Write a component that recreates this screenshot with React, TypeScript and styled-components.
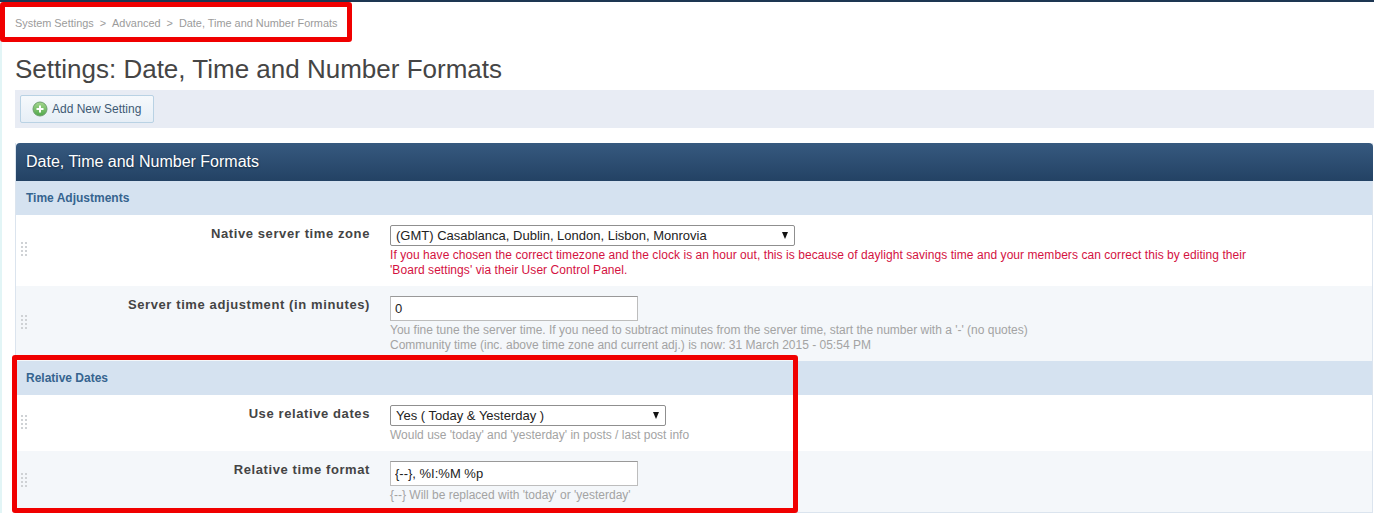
import styled, { createGlobalStyle } from 'styled-components'

const GlobalStyle = createGlobalStyle`
  html, body {
    margin: 0;
    padding: 0;
    background: #fff;
    font-family: "Liberation Sans", Arial, sans-serif;
    overflow: hidden;
  }
`

const Page = styled.div`
  position: relative;
  width: 1374px;
  height: 513px;
  overflow: hidden;
  border-top: 2px solid #1d3652;
  box-sizing: border-box;
  padding-left: 15px;
  box-shadow: inset 2px 0 0 #e2f5f6;
`

const Breadcrumb = styled.div`
  display: flex;
  gap: 6px;
  height: 42px;
  align-items: center;
  font-size: 10.9px;
  color: #9b9b9b;
`

const Title = styled.h1`
  margin: 0;
  height: 46px;
  line-height: 50px;
  font-size: 26px;
  font-weight: 400;
  color: #454545;
`

const Toolbar = styled.div`
  display: flex;
  align-items: center;
  height: 38px;
  padding-left: 5px;
  background: #e8ecf4;
`

const AddButton = styled.button`
  display: flex;
  align-items: center;
  gap: 4px;
  width: 134px;
  height: 28px;
  padding: 0 0 0 11px;
  border: 1px solid #b9d2e4;
  border-radius: 2px;
  background: linear-gradient(#f6f9fc, #e6eef6);
  color: #3e5a74;
  font-family: inherit;
  font-size: 12px;
`

const Panel = styled.section`
  margin-top: 15px;
  width: 1358px;
  box-sizing: border-box;
  border-right: 1px solid #dbe4ee;
  border-left: 1px solid #dbe4ee;
  border-bottom: 1px solid #dbe4ee;
`

const PanelHeader = styled.h2`
  margin: 0 -1px 0 0;
  height: 38px;
  padding-left: 10px;
  line-height: 38px;
  border-radius: 4px 4px 0 0;
  background: linear-gradient(#36597f, #234264);
  color: #fff;
  font-size: 16px;
  font-weight: 400;
  text-shadow: 0 1px 2px #12263c;
`

const SectionHeader = styled.h3`
  margin: 0;
  height: 34px;
  padding-left: 10px;
  line-height: 34px;
  background: #d5e2f0;
  color: #36648f;
  font-size: 12px;
  font-weight: 700;
`

const Row = styled.div<{ $alt?: boolean; $height: number }>`
  display: flex;
  height: ${(p) => p.$height}px;
  box-sizing: border-box;
  padding-top: 10px;
  background: ${(p) => (p.$alt ? '#f4f7fa' : '#fff')};
`

const Grip = styled.div`
  align-self: center;
  display: grid;
  grid-template-columns: repeat(2, 2px);
  gap: 2px;
  margin: -13px 0 0 5px;
  width: 6px;
  flex: none;

  span {
    width: 2px;
    height: 2px;
    background: #cfd2d5;
  }
`

const Label = styled.div`
  width: 343px;
  flex: none;
  padding-top: 1px;
  text-align: right;
  font-size: 13px;
  line-height: 15px;
  font-weight: 700;
  letter-spacing: 0.6px;
  color: #444;
`

const Control = styled.div`
  margin-left: 20px;
  flex: 1;
`

const SelectWrap = styled.div<{ $width: number }>`
  position: relative;
  width: ${(p) => p.$width}px;
  height: 21px;

  &::after {
    content: '';
    position: absolute;
    right: 7px;
    top: 7px;
    border-left: 3px solid transparent;
    border-right: 3px solid transparent;
    border-top: 7px solid #111;
  }
`

const Select = styled.select`
  appearance: none;
  display: block;
  width: 100%;
  height: 21px;
  box-sizing: border-box;
  padding: 0 0 0 5px;
  border: 1px solid #8f8f8f;
  border-radius: 2px;
  background: #fff;
  color: #222;
  font-family: inherit;
  font-size: 13px;
`

const TextField = styled.input`
  display: block;
  width: 248px;
  height: 25px;
  box-sizing: border-box;
  padding: 0 4px;
  border: 1px solid #bdbdbd;
  border-top-color: #999;
  background: #fff;
  color: #222;
  font-family: inherit;
  font-size: 13px;
`

const Hint = styled.div<{ $error?: boolean }>`
  margin-top: 2px;
  font-size: 12px;
  line-height: 15px;
  letter-spacing: ${(p) => (p.$error ? '0.06px' : '0')};
  color: ${(p) => (p.$error ? '#d4123f' : '#a3a3a3')};
`

const Highlight = styled.div<{ $left: number; $top: number; $width: number; $height: number }>`
  position: absolute;
  left: ${(p) => p.$left}px;
  top: ${(p) => p.$top}px;
  width: ${(p) => p.$width}px;
  height: ${(p) => p.$height}px;
  box-sizing: border-box;
  border: 5px solid #f00000;
  border-radius: 3px;
  pointer-events: none;
`

const DragHandle = () => (
  <Grip>
    {Array.from({ length: 8 }, (_, i) => (
      <span key={i} />
    ))}
  </Grip>
)

const AddIcon = () => (
  <svg width="16" height="16" viewBox="0 0 16 16" aria-hidden="true">
    <defs>
      <linearGradient id="addGreen" x1="0" y1="0" x2="0" y2="1">
        <stop offset="0" stopColor="#a6d88f" />
        <stop offset="1" stopColor="#4fa74a" />
      </linearGradient>
    </defs>
    <circle cx="8" cy="8" r="7" fill="url(#addGreen)" stroke="#6f9f70" />
    <path d="M8 4.5v7M4.5 8h7" stroke="#fff" strokeWidth="2" />
  </svg>
)

const App = () => (
  <>
    <GlobalStyle />
    <Page>
      <Breadcrumb>
        <span>System Settings</span>
        <span>&gt;</span>
        <span>Advanced</span>
        <span>&gt;</span>
        <span>Date, Time and Number Formats</span>
      </Breadcrumb>
      <Title>Settings: Date, Time and Number Formats</Title>
      <Toolbar>
        <AddButton type="button">
          <AddIcon />
          Add New Setting
        </AddButton>
      </Toolbar>
      <Panel>
        <PanelHeader>Date, Time and Number Formats</PanelHeader>
        <SectionHeader>Time Adjustments</SectionHeader>
        <Row $height={71}>
          <DragHandle />
          <Label>Native server time zone</Label>
          <Control>
            <SelectWrap $width={405}>
              <Select defaultValue="gmt">
                <option value="gmt">(GMT) Casablanca, Dublin, London, Lisbon, Monrovia</option>
              </Select>
            </SelectWrap>
            <Hint $error>
              If you have chosen the correct timezone and the clock is an hour out, this is because of daylight savings time and your members can correct this by editing their
              <br />
              'Board settings' via their User Control Panel.
            </Hint>
          </Control>
        </Row>
        <Row $alt $height={75}>
          <DragHandle />
          <Label>Server time adjustment (in minutes)</Label>
          <Control>
            <TextField defaultValue="0" />
            <Hint>
              You fine tune the server time. If you need to subtract minutes from the server time, start the number with a '-' (no quotes)
              <br />
              Community time (inc. above time zone and current adj.) is now: 31 March 2015 - 05:54 PM
            </Hint>
          </Control>
        </Row>
        <SectionHeader>Relative Dates</SectionHeader>
        <Row $height={56}>
          <DragHandle />
          <Label>Use relative dates</Label>
          <Control>
            <SelectWrap $width={276}>
              <Select defaultValue="yes">
                <option value="yes">Yes ( Today &amp; Yesterday )</option>
              </Select>
            </SelectWrap>
            <Hint>Would use 'today' and 'yesterday' in posts / last post info</Hint>
          </Control>
        </Row>
        <Row $alt $height={61}>
          <DragHandle />
          <Label>Relative time format</Label>
          <Control>
            <TextField defaultValue="{--}, %I:%M %p" />
            <Hint>{"{--} Will be replaced with 'today' or 'yesterday'"}</Hint>
          </Control>
        </Row>
      </Panel>
      <Highlight $left={0} $top={0} $width={352} $height={40} />
      <Highlight $left={12} $top={353} $width={786} $height={158} />
    </Page>
  </>
)

export default App
